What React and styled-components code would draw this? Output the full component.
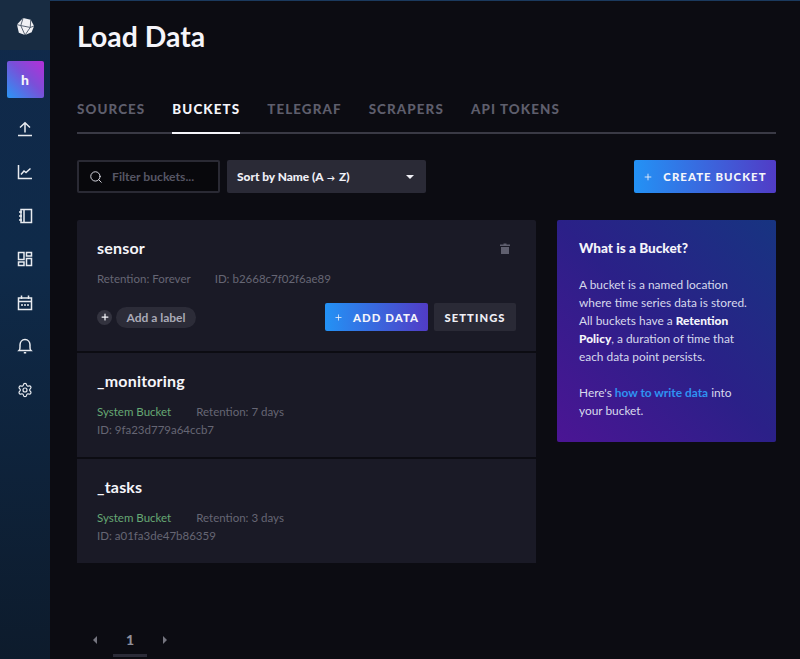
import React from "react";
import styled, { createGlobalStyle } from "styled-components";
import { Search, Plus, Settings } from "lucide-react";

const GlobalStyle = createGlobalStyle`
  html, body {
    margin: 0;
    padding: 0;
    height: 100%;
    background: #0c0c12;
    overflow: hidden;
  }
  body {
    font-family: "Lato", "Liberation Sans", sans-serif;
    -webkit-font-smoothing: antialiased;
  }
`;

const Page = styled.div`
  display: flex;
  width: 800px;
  height: 659px;
  background: #0c0c12;
  box-shadow: inset 0 1px 0 #1b3a5e;
`;

const Sidebar = styled.nav`
  width: 50px;
  flex: none;
  display: flex;
  flex-direction: column;
  align-items: center;
  background: linear-gradient(180deg, #10294a 0%, #0f2a49 40%, #0d1b2c 100%);
`;

const LogoCell = styled.div`
  width: 100%;
  height: 50px;
  padding-top: 2px;
  box-sizing: border-box;
  display: flex;
  align-items: center;
  justify-content: center;
  background: #182c42;
`;

const Avatar = styled.div`
  width: 37px;
  height: 37px;
  margin: 11px 0 9px;
  border-radius: 2px;
  display: flex;
  align-items: center;
  justify-content: center;
  background: linear-gradient(45deg, #2a96f5 0%, #7a4fd8 55%, #b52fd8 100%);
  color: #f5f5fa;
  font-size: 14px;
  font-weight: 900;
`;

const NavItem = styled.div`
  width: 100%;
  height: 43.5px;
  display: flex;
  align-items: center;
  justify-content: center;
  color: #e8ebf0;
`;

const Main = styled.main`
  flex: 1;
  min-width: 0;
  padding: 0 24px 0 27px;
  display: flex;
  flex-direction: column;
`;

const Title = styled.h1`
  margin: 0;
  height: 74px;
  line-height: 74px;
  margin-top: -1px;
  font-size: 28.4px;
  font-weight: 700;
  color: #f5f5fa;
`;

const Tabs = styled.div`
  display: flex;
  gap: 27px;
  margin-top: 13px;
  border-bottom: 2px solid #3a3a45;
`;

const Tab = styled.div`
  height: 46px;
  line-height: 47px;
  margin-bottom: -2px;
  font-size: 13.4px;
  font-weight: 900;
  letter-spacing: 1.1px;
  color: ${p => (p.$active ? "#f5f5fa" : "#5e5e6c")};
  border-bottom: 2px solid ${p => (p.$active ? "#f5f5fa" : "transparent")};
`;

const Controls = styled.div`
  display: flex;
  align-items: center;
  gap: 7px;
  margin-top: 26px;
  height: 33px;
`;

const SearchBox = styled.div`
  width: 143px;
  height: 33px;
  box-sizing: border-box;
  display: flex;
  align-items: center;
  gap: 9px;
  padding-left: 10px;
  border: 2px solid #2a2a34;
  border-radius: 2px;
  background: #08080c;
  color: #e0e0e8;
`;

const Placeholder = styled.span`
  font-size: 12.2px;
  font-weight: 700;
  color: #565664;
`;

const SortSelect = styled.div`
  width: 199px;
  height: 33px;
  box-sizing: border-box;
  padding: 0 12px 0 10px;
  display: flex;
  align-items: center;
  justify-content: space-between;
  border-radius: 2px;
  background: #2a2a36;
  color: #f0f0f6;
  font-size: 11.9px;
  font-weight: 900;
`;

const SmallArrow = styled.span`
  font-size: 8px;
  margin: 0 1px;
`;

const Caret = styled.span`
  width: 0;
  height: 0;
  border-left: 4px solid transparent;
  border-right: 4px solid transparent;
  border-top: 4px solid #f0f0f6;
`;

const GradientButton = styled.button`
  height: ${p => p.$height}px;
  width: ${p => p.$width}px;
  margin-left: ${p => (p.$push ? "auto" : "0")};
  border: 0;
  border-radius: 2px;
  padding: 0;
  display: flex;
  align-items: center;
  justify-content: center;
  gap: 10px;
  background: linear-gradient(90deg, #2392f5 0%, #513cc6 100%);
  color: #f5f5fa;
  font-family: inherit;
  font-size: 11.4px;
  font-weight: 900;
  letter-spacing: 1.05px;
`;

const Columns = styled.div`
  display: flex;
  align-items: flex-start;
  gap: 21px;
  margin-top: 27px;
`;

const BucketList = styled.div`
  width: 459px;
  display: flex;
  flex-direction: column;
  gap: 2px;
`;

const Card = styled.div`
  height: ${p => p.$height}px;
  box-sizing: border-box;
  padding: 19px 20px 0;
  background: #1a1a26;
  border-radius: ${p => (p.$first ? "2px 2px 0 0" : "0")};
`;

const CardHead = styled.div`
  display: flex;
  align-items: center;
  justify-content: space-between;
  height: 20px;
`;

const BucketName = styled.div`
  font-size: 16px;
  font-weight: 700;
  letter-spacing: 0.2px;
  color: #f5f5fa;
  margin-top: -4px;
`;

const Meta = styled.div`
  display: flex;
  gap: ${p => p.$gap || 24}px;
  margin-top: ${p => p.$top || 0}px;
  height: 18px;
  line-height: 18px;
  font-size: 11.5px;
  color: #666674;
`;

const SystemTag = styled.span`
  color: #66a874;
`;

const CardActions = styled.div`
  display: flex;
  align-items: center;
  margin-top: 15px;
`;

const RoundPlus = styled.span`
  width: 15px;
  height: 15px;
  border-radius: 50%;
  background: #33333f;
  color: #f5f5fa;
  display: flex;
  align-items: center;
  justify-content: center;
`;

const LabelPill = styled.span`
  margin-left: 4px;
  width: 80px;
  height: 21px;
  line-height: 21px;
  text-align: center;
  border-radius: 11px;
  background: #2c2c38;
  color: #a9a9b6;
  font-size: 12px;
  font-weight: 700;
`;

const ButtonRow = styled.div`
  margin-left: auto;
  display: flex;
  gap: 6px;
`;

const SettingsButton = styled.button`
  width: 82px;
  height: 28px;
  padding: 0;
  border: 0;
  border-radius: 2px;
  background: #2a2a36;
  color: #f0f0f6;
  font-family: inherit;
  font-size: 11.2px;
  font-weight: 900;
  letter-spacing: 1.1px;
`;

const HelpPanel = styled.aside`
  width: 219px;
  height: 222px;
  box-sizing: border-box;
  padding: 19px 22px;
  border-radius: 2px;
  background: linear-gradient(45deg, #4b1594 0%, #2b2088 50%, #173481 100%);
  color: #d7d9ec;
  font-size: 11.9px;
  line-height: 18px;
`;

const HelpTitle = styled.div`
  font-size: 13.6px;
  font-weight: 900;
  color: #f5f5fa;
  margin-bottom: 19px;
`;

const HelpText = styled.p`
  margin: 0 0 18px;
  b {
    color: #f5f5fa;
    font-weight: 900;
  }
`;

const HelpLink = styled.span`
  color: #2f93f2;
  font-weight: 700;
`;

const Pager = styled.div`
  margin: auto 0 2px 16px;
  width: 74px;
  display: flex;
  align-items: flex-start;
  justify-content: space-between;
  color: #8f8f9a;
`;

const PageNumber = styled.span`
  width: 34px;
  height: 19px;
  line-height: 19px;
  padding-bottom: 5px;
  text-align: center;
  font-size: 14px;
  font-weight: 900;
  border-bottom: 3px solid #2c2c38;
`;

const PagerArrow = styled.span`
  margin-top: 6px;
  width: 0;
  height: 0;
  border-top: 4px solid transparent;
  border-bottom: 4px solid transparent;
  ${p => (p.$left ? "border-right: 4px solid #75757f;" : "border-left: 4px solid #75757f;")}
`;

const Glyph = ({ children }) => (
  <svg width="18" height="18" viewBox="0 0 18 18" fill="none" stroke="currentColor" strokeWidth="1.5">
    {children}
  </svg>
);

const buckets = [
  { name: "_monitoring", retention: "7 days", id: "9fa23d779a64ccb7" },
  { name: "_tasks", retention: "3 days", id: "a01fa3de47b86359" },
];

export default function App() {
  return (
    <Page>
      <GlobalStyle />
      <Sidebar>
        <LogoCell>
          <svg width="19" height="19" viewBox="0 0 20 20">
            <path d="M7.5 1 L15.5 2.8 L19 9.5 L16.5 16 L9.5 19 L3 16.5 L1 8 Z" fill="#f0f1f4" />
            <path d="M7.5 1 L5 9 L9.5 19 M5 9 L1 8 M5 9 L15 11 L15.5 2.8 M15 11 L9.5 19 M15 11 L19 9.5" stroke="#3c4a5c" strokeWidth="0.9" fill="none" />
          </svg>
        </LogoCell>
        <Avatar>h</Avatar>
        <NavItem>
          <Glyph>
            <path d="M2 15.5 H16 M9 12.5 V3 M4 7.5 L9 2.8 L14 7.5" />
          </Glyph>
        </NavItem>
        <NavItem>
          <Glyph>
            <path d="M2.5 2 V15.5 H16 M5 11.5 L8 8 L10 9.5 L14.5 5.5" />
          </Glyph>
        </NavItem>
        <NavItem>
          <Glyph>
            <path d="M5 2.5 H15.5 V15.5 H5 Z M8 2.5 V15.5 M3 5 H6 M3 9 H6 M3 13 H6" />
          </Glyph>
        </NavItem>
        <NavItem>
          <Glyph>
            <path d="M2.5 2.5 H8 V9.5 H2.5 Z M10.5 2.5 H15.5 V6 H10.5 Z M2.5 12 H8 V15.5 H2.5 Z M10.5 8.5 H15.5 V15.5 H10.5 Z" />
          </Glyph>
        </NavItem>
        <NavItem>
          <Glyph>
            <path d="M2.5 4 H15.5 V15.5 H2.5 Z M2.5 7.5 H15.5 M5.5 1.5 V5 M12.5 1.5 V5 M5 11 H7 M8 11 H10 M11 11 H13" />
          </Glyph>
        </NavItem>
        <NavItem>
          <Glyph>
            <path d="M3 13.5 C4.5 12 4 10 4 8 C4 5 6 2.5 9 2.5 C12 2.5 14 5 14 8 C14 10 13.5 12 15 13.5 Z M7.8 15.8 H10.2" />
          </Glyph>
        </NavItem>
        <NavItem>
          <Settings size={16} strokeWidth={1.8} />
        </NavItem>
      </Sidebar>
      <Main>
        <Title>Load Data</Title>
        <Tabs>
          <Tab>SOURCES</Tab>
          <Tab $active>BUCKETS</Tab>
          <Tab>TELEGRAF</Tab>
          <Tab>SCRAPERS</Tab>
          <Tab>API TOKENS</Tab>
        </Tabs>
        <Controls>
          <SearchBox>
            <Search size={14} strokeWidth={1.6} />
            <Placeholder>Filter buckets...</Placeholder>
          </SearchBox>
          <SortSelect>
            <span>
              Sort by Name (A <SmallArrow>→</SmallArrow> Z)
            </span>
            <Caret />
          </SortSelect>
          <GradientButton $push $width={142} $height={33}>
            <Plus size={10} strokeWidth={2} />
            CREATE BUCKET
          </GradientButton>
        </Controls>
        <Columns>
          <BucketList>
            <Card $first $height={131}>
              <CardHead>
                <BucketName>sensor</BucketName>
                <svg width="10" height="11" viewBox="0 0 10 11" style={{ marginRight: 6, marginTop: -2 }}>
                  <path d="M3.5 0.5 H6.5 V1.5 H10 V3 H0 V1.5 H3.5 Z M1 4 H9 V11 H1 Z" fill="#5f5f6e" />
                </svg>
              </CardHead>
              <Meta $top={11}>
                <span>Retention: Forever</span>
                <span>ID: b2668c7f02f6ae89</span>
              </Meta>
              <CardActions>
                <RoundPlus>
                  <Plus size={10} strokeWidth={3} />
                </RoundPlus>
                <LabelPill>Add a label</LabelPill>
                <ButtonRow>
                  <GradientButton $width={103} $height={28}>
                    <Plus size={9} strokeWidth={2} />
                    ADD DATA
                  </GradientButton>
                  <SettingsButton>SETTINGS</SettingsButton>
                </ButtonRow>
              </CardActions>
            </Card>
            {buckets.map(b => (
              <Card key={b.name} $height={104}>
                <CardHead>
                  <BucketName>{b.name}</BucketName>
                </CardHead>
                <Meta $top={11} $gap={25}>
                  <SystemTag>System Bucket</SystemTag>
                  <span>Retention: {b.retention}</span>
                </Meta>
                <Meta>
                  <span>ID: {b.id}</span>
                </Meta>
              </Card>
            ))}
          </BucketList>
          <HelpPanel>
            <HelpTitle>What is a Bucket?</HelpTitle>
            <HelpText>
              A bucket is a named location
              <br />
              where time series data is stored.
              <br />
              All buckets have a <b>Retention</b>
              <br />
              <b>Policy</b>, a duration of time that
              <br />
              each data point persists.
            </HelpText>
            <HelpText>
              Here's <HelpLink>how to write data</HelpLink> into
              <br />
              your bucket.
            </HelpText>
          </HelpPanel>
        </Columns>
        <Pager>
          <PagerArrow $left />
          <PageNumber>1</PageNumber>
          <PagerArrow />
        </Pager>
      </Main>
    </Page>
  );
}
